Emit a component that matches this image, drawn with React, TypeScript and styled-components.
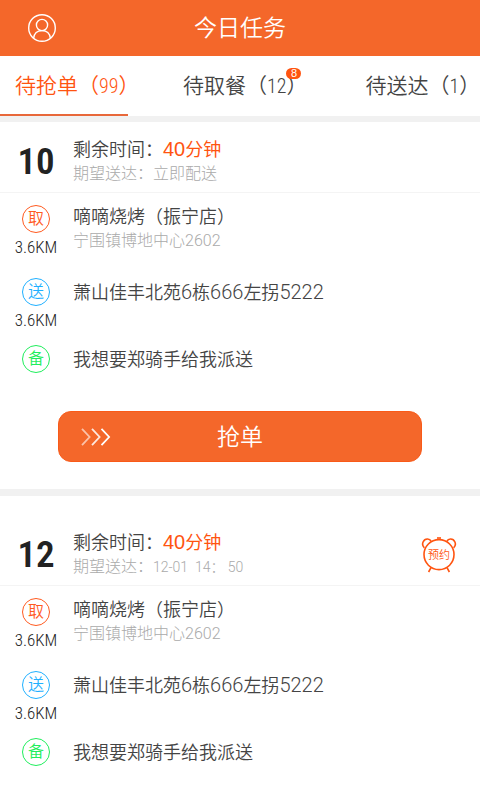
import React from "react";
import styled, { createGlobalStyle } from "styled-components";

const ORANGE = "#f4672a";
const BRIGHT = "#ff5410";
const NARROW = `"Roboto Condensed", "Liberation Sans Narrow", "Arial Narrow"`;

const GlobalStyle = createGlobalStyle`
  * { box-sizing: border-box; }
  body {
    margin: 0;
    background: #fff;
    color: #444;
    font-family: "Liberation Sans", "Noto Sans CJK SC", sans-serif;
    font-weight: 350;
  }
  h1, h2, p { margin: 0; font-weight: inherit; }
  button {
    border: 0;
    padding: 0;
    background: none;
    color: inherit;
    font: inherit;
    cursor: pointer;
  }
`;

const TopBar = styled.header`
  display: grid;
  grid-template-columns: 1fr auto 1fr;
  align-items: center;
  height: 56px;
  padding: 0 28px;
  background: ${ORANGE};
  color: #fff;
`;

const ProfileButton = styled.button`
  justify-self: start;
  width: 28px;
  height: 28px;
  svg { display: block; }
`;

const Title = styled.h1`
  font-size: 23px;
  line-height: 28px;
`;

const Tabs = styled.nav`
  display: grid;
  grid-template-columns: 35fr 38fr 27fr;
  height: 60px;
`;

const Tab = styled.button<{ $active?: boolean }>`
  display: flex;
  flex-direction: column;
  align-items: flex-start;
  min-width: 0;
  padding-top: 18px;
  color: ${(p) => (p.$active ? BRIGHT : "inherit")};
  &::after {
    content: "";
    width: 128px;
    height: 2px;
    margin-top: auto;
    background: ${(p) => (p.$active ? "#e8683a" : "transparent")};
  }
`;

const TabLabel = styled.span`
  position: relative;
  margin-left: 15px;
  font-size: 21px;
  line-height: 24px;
  white-space: nowrap;
`;

const Count = styled.span`
  font-family: ${NARROW}, sans-serif;
  font-size: 20px;
  line-height: 1;
`;

const Badge = styled.span`
  position: absolute;
  top: -6px;
  right: 6px;
  width: 15px;
  height: 11px;
  border-radius: 6px;
  background: ${BRIGHT};
  color: #fff;
  font-size: 11px;
  line-height: 11px;
  text-align: center;
`;

const Card = styled.article<{ $roomy?: boolean }>`
  border-top: ${(p) => (p.$roomy ? 7 : 6)}px solid #f1f1f1;
  padding-top: ${(p) => (p.$roomy ? 19 : 0)}px;
`;

const CardHead = styled.div`
  display: grid;
  grid-template-columns: 72px 1fr auto;
  column-gap: 1px;
  align-items: center;
  padding: 16px 23px 7px 0;
  border-bottom: 1px solid #f4f4f4;
`;

const Minutes = styled.span`
  color: #222;
  font-family: ${NARROW}, sans-serif;
  font-size: 37px;
  font-weight: 600;
  line-height: 46px;
  text-align: center;
`;

const MainLine = styled.h2`
  font-size: 18px;
  line-height: 25px;
`;

const Remaining = styled.span`
  color: ${BRIGHT};
  font-weight: 400;
`;

const Digits = styled.span`
  font-family: Roboto, "Liberation Sans", sans-serif;
  font-weight: 300;
  font-size: 20px;
  line-height: 1;
`;

const Countdown = styled.span`
  font-size: 20px;
  line-height: 1;
`;

const SubLine = styled.p`
  color: #aaa;
  font-family: Roboto, "Noto Sans CJK SC", sans-serif;
  font-size: 16px;
  font-weight: 300;
  line-height: 22px;
  white-space: pre;
`;

const Schedule = styled.span`
  font-size: 14px;
  line-height: 1;
`;

const Stops = styled.div`
  display: grid;
  row-gap: 21px;
  padding: 12px 0 15px;
`;

const Row = styled.div`
  display: grid;
  grid-template-columns: 72px 1fr;
  column-gap: 1px;
`;

const Marker = styled.div`
  display: flex;
  flex-direction: column;
  align-items: center;
  gap: 4px;
`;

const Ring = styled.span<{ $color: string }>`
  width: 28px;
  height: 28px;
  border: 1px solid ${(p) => p.$color};
  border-radius: 50%;
  color: ${(p) => p.$color};
  font-size: 16px;
  line-height: 26px;
  text-align: center;
`;

const Distance = styled.span`
  color: #222;
  font-family: ${NARROW}, sans-serif;
  font-size: 17px;
  line-height: 20px;
`;

const Address = styled.p`
  font-size: 18px;
  line-height: 30px;
`;

const GrabButton = styled.button`
  display: grid;
  grid-template-columns: 1fr auto 1fr;
  align-items: center;
  width: 76%;
  height: 51px;
  margin: 36px auto 27px;
  padding: 0 22px;
  border: 1px solid #f95a18;
  border-radius: 13px;
  background: ${ORANGE};
  color: #fff;
  font-size: 23px;
  line-height: 28px;
`;

const UserIcon = () => (
  <svg width="28" height="28" viewBox="0 0 28 28" fill="none" stroke="#fff" strokeWidth="1.4" aria-hidden="true">
    <circle cx="14" cy="14" r="13.3" />
    <circle cx="14" cy="11" r="5.6" />
    <path d="M5.6 24.2C6.2 19.6 9.4 16.6 14 16.6S21.8 19.6 22.4 24.2" />
  </svg>
);

const Chevrons = () => (
  <svg width="30" height="18" viewBox="0 0 30 18" fill="none" stroke="#fff" strokeWidth="1.8" aria-hidden="true">
    <path d="M1 .8 8.6 9 1 17.2" opacity=".6" />
    <path d="M11 .8 18.6 9 11 17.2" opacity=".85" />
    <path d="M20.5 .8 28.1 9 20.5 17.2" />
  </svg>
);

const AlarmBox = styled.span`
  display: grid;
  place-items: center;
  color: ${BRIGHT};
  font-size: 11px;
  line-height: 34px;
  svg, span { grid-area: 1 / 1; }
`;

const AlarmClock = () => (
  <AlarmBox>
    <svg width="36" height="36" viewBox="0 0 36 36" fill="none" stroke={BRIGHT} strokeWidth="1.6" aria-hidden="true">
      <circle cx="18" cy="17.6" r="15" />
      <path d="M16 1h4" />
      <path d="M3.4 10.8C-.4 7.200 2.600 1.800 6.600 2 8.400 2.100 9.400 2.900 10 4" />
      <path d="M32.600 10.800C36.400 7.200 33.400 1.800 29.400 2 27.600 2.100 26.600 2.900 26 4" />
      <path d="M10 30.600 7.600 35M26 30.600l2.400 4.400" />
    </svg>
    <span>预约</span>
  </AlarmBox>
);

type Order = {
  minutes: number;
  expected: React.ReactNode;
  booked?: boolean;
  grabbable?: boolean;
};

const orders: Order[] = [
  { minutes: 10, expected: "立即配送", grabbable: true },
  { minutes: 12, expected: <Schedule>{"12-01  14： 50"}</Schedule>, booked: true },
];

const OrderCard = ({ minutes, expected, booked, grabbable }: Order) => (
  <Card $roomy={booked}>
    <CardHead>
      <Minutes>{minutes}</Minutes>
      <div>
        <MainLine>
          剩余时间：<Remaining><Countdown>40</Countdown>分钟</Remaining>
        </MainLine>
        <SubLine>期望送达：{expected}</SubLine>
      </div>
      {booked && <AlarmClock />}
    </CardHead>
    <Stops>
      <Row>
        <Marker>
          <Ring $color="#ff5a1f">取</Ring>
          <Distance>3.6KM</Distance>
        </Marker>
        <div>
          <MainLine>嘀嘀烧烤（振宁店）</MainLine>
          <SubLine>宁围镇博地中心2602</SubLine>
        </div>
      </Row>
      <Row>
        <Marker>
          <Ring $color="#1fb0ff">送</Ring>
          <Distance>3.6KM</Distance>
        </Marker>
        <Address>
          萧山佳丰北苑<Digits>6</Digits>栋<Digits>666</Digits>左拐<Digits>5222</Digits>
        </Address>
      </Row>
    </Stops>
    <Row>
      <Marker>
        <Ring $color="#1fee5c">备</Ring>
      </Marker>
      <Address>我想要郑骑手给我派送</Address>
    </Row>
    {grabbable && (
      <GrabButton type="button">
        <Chevrons />
        <span>抢单</span>
      </GrabButton>
    )}
  </Card>
);

export default function App() {
  return (
    <>
      <GlobalStyle />
      <TopBar>
        <ProfileButton type="button" aria-label="个人中心">
          <UserIcon />
        </ProfileButton>
        <Title>今日任务</Title>
      </TopBar>
      <Tabs>
        <Tab type="button" $active aria-current="page">
          <TabLabel>
            待抢单（<Count>99</Count>）
          </TabLabel>
        </Tab>
        <Tab type="button">
          <TabLabel>
            待取餐（<Count>12</Count>）<Badge>8</Badge>
          </TabLabel>
        </Tab>
        <Tab type="button">
          <TabLabel>
            待送达（<Count>1</Count>）
          </TabLabel>
        </Tab>
      </Tabs>
      <main>
        {orders.map((order) => (
          <OrderCard key={order.minutes} {...order} />
        ))}
      </main>
    </>
  );
}
